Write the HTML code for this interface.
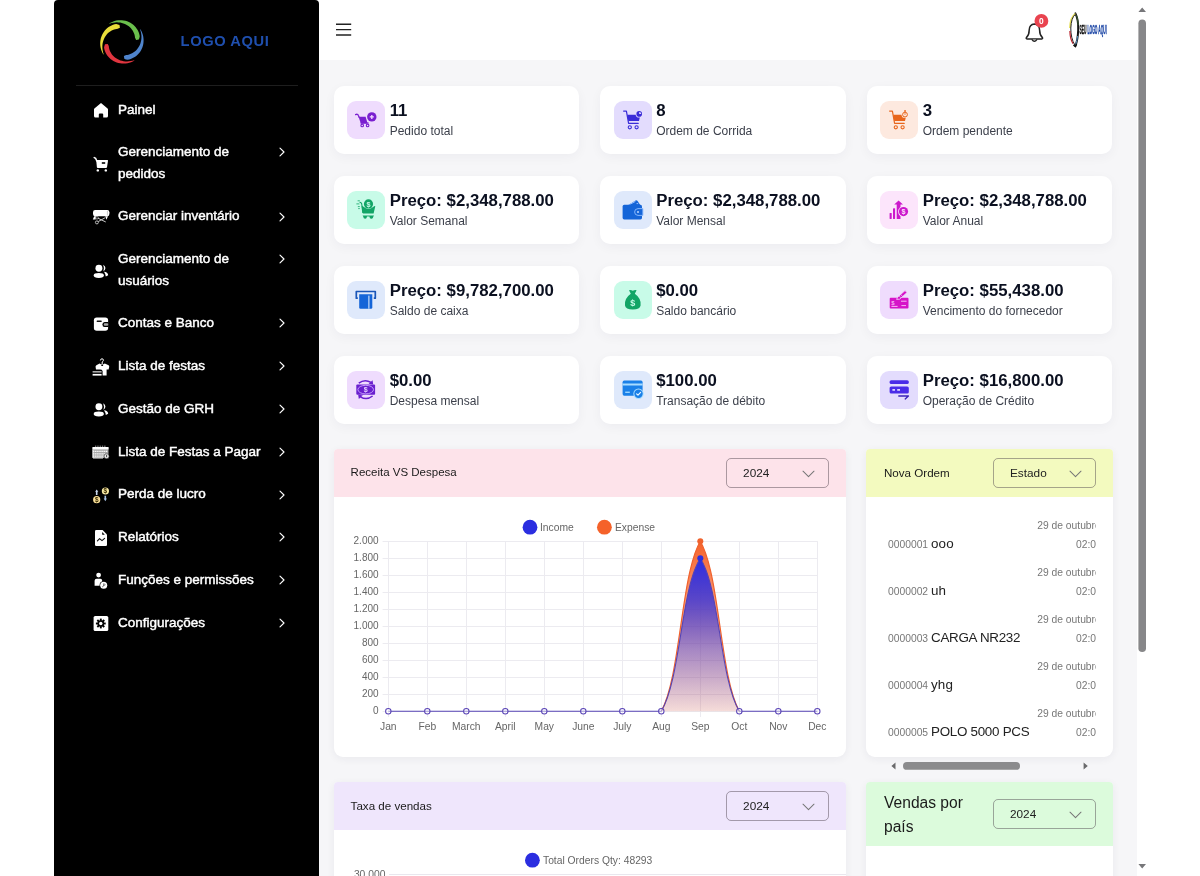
<!DOCTYPE html>
<html lang="pt">
<head>
<meta charset="utf-8">
<title>Painel</title>
<style>
*{box-sizing:border-box;margin:0;padding:0}
html,body{width:1200px;height:876px;overflow:hidden;background:#fff}
body{position:relative;font-family:"Liberation Sans",sans-serif;color:#0f172a}
.abs{position:absolute}
/* sidebar */
.sidebar{position:absolute;left:54px;top:0;width:265px;height:876px;background:#000;border-radius:4px 4px 0 0}
.sidebar .logo-text{position:absolute;left:126.6px;top:33.4px;font-weight:bold;font-size:14.7px;letter-spacing:.6px;color:#1f4fae;white-space:nowrap}
.sidebar .sep{position:absolute;left:22px;top:85px;width:222px;height:1px;background:#1e1e1e}
.nav-item{position:absolute;left:64px;width:180px;font-size:13.5px;line-height:21.4px;color:#fff;white-space:nowrap;-webkit-text-stroke:.45px #fff}
.nav-ico{position:absolute;left:38px;width:18px;height:18px}
.nav-chev{position:absolute;left:224px;width:8px;height:10px}
/* header */
.header{position:absolute;left:319px;top:0;width:817px;height:60px;background:#fff}
.content{position:absolute;left:319px;top:60px;width:818px;height:816px;background:#f6f6f8;overflow:hidden}
/* cards */
.card{position:absolute;width:245.6px;height:68.4px;background:#fff;border-radius:10px;box-shadow:0 3px 12px rgba(25,25,60,.045)}
.card .ib{position:absolute;left:13.4px;top:15.6px;width:38px;height:38px;border-radius:9px}
.card .ib svg{position:absolute;left:0;top:0;width:38px;height:38px}
.card .v{position:absolute;left:56px;top:15px;font-weight:bold;font-size:16.8px;line-height:20px;white-space:nowrap;color:#0b1020}
.card .l{position:absolute;left:56px;top:37px;font-size:12px;line-height:16px;white-space:nowrap;color:#3b3f4a}
/* panels */
.panel{position:absolute;background:#fff;border-radius:4px 4px 9px 9px;box-shadow:0 2px 8px rgba(30,30,60,.06);overflow:hidden}
.panel .ph{position:absolute;left:0;top:0;right:0}
.panel .pt{position:absolute;font-size:12px;color:#1a1a1a;white-space:nowrap}
.sel{position:absolute;width:103px;height:30px;border:1px solid rgba(70,60,70,.45);border-radius:5px;font-size:11.8px;color:#222;line-height:28px;padding-left:16px}
.sel svg{position:absolute;right:13px;top:10.5px;width:13px;height:8px}
.pt2{position:absolute;font-size:15.6px;line-height:24px;color:#1a1a1a;white-space:nowrap}
.clipx{position:absolute;left:0;top:48px;width:229.5px;height:260px;overflow:hidden}
.clipx>div{position:absolute;white-space:nowrap;margin-top:-48px}
.oid{left:22px;font-size:10.3px;line-height:12px;color:#777}
.onm{left:65px;font-size:13.4px;line-height:16px;color:#222}
.odt{font-size:10.3px;line-height:12px;color:#777}
.sidebar,.header,.content{will-change:transform}
</style>
</head>
<body>
<div class="sidebar"><svg class="abs" style="left:0;top:0" width="265" height="90" viewBox="54 0 265 90"><path fill="#6abf4c" d="M138.81 39.52 L139.38 37.92 L139.74 36.22 L139.43 34.64 L138.97 33.08 L138.37 31.54 L137.62 30.06 L136.73 28.63 L135.7 27.27 L134.55 26 L133.27 24.83 L131.88 23.77 L130.39 22.83 L128.81 22.02 L127.15 21.35 L125.43 20.83 L123.65 20.46 L121.84 20.25 L120 20.2 L118.16 20.32 L116.32 20.6 L114.51 21.04 L112.74 21.65 L111.02 22.41 L109.37 23.33 L109.6 23.66 L111.4 23.09 L113.21 22.68 L115.01 22.44 L116.78 22.34 L118.52 22.4 L120.21 22.6 L121.84 22.94 L123.41 23.41 L124.9 23.99 L126.3 24.68 L127.61 25.47 L128.82 26.35 L129.94 27.3 L130.94 28.33 L131.84 29.41 L132.62 30.54 L133.29 31.7 L133.85 32.89 L134.3 34.1 L134.65 35.31 L134.88 36.52 L135.01 37.72 L135.56 38.79 L136.09 39.91Z"/><path fill="#e9de3a" d="M119.52 24.99 L117.92 24.42 L116.22 24.06 L114.64 24.37 L113.08 24.83 L111.54 25.43 L110.06 26.18 L108.63 27.07 L107.27 28.1 L106 29.25 L104.83 30.53 L103.77 31.92 L102.83 33.41 L102.02 34.99 L101.35 36.65 L100.83 38.37 L100.46 40.15 L100.25 41.96 L100.2 43.8 L100.32 45.64 L100.6 47.48 L101.04 49.29 L101.65 51.06 L102.41 52.78 L103.33 54.43 L103.66 54.2 L103.09 52.4 L102.68 50.59 L102.44 48.79 L102.34 47.02 L102.4 45.28 L102.6 43.59 L102.94 41.96 L103.41 40.39 L103.99 38.9 L104.68 37.5 L105.47 36.19 L106.35 34.98 L107.3 33.86 L108.33 32.86 L109.41 31.96 L110.54 31.18 L111.7 30.51 L112.89 29.95 L114.1 29.5 L115.31 29.15 L116.52 28.92 L117.72 28.79 L118.79 28.24 L119.91 27.71Z"/><path fill="#e0353f" d="M104.99 44.28 L104.42 45.88 L104.06 47.58 L104.37 49.16 L104.83 50.72 L105.43 52.26 L106.18 53.74 L107.07 55.17 L108.1 56.53 L109.25 57.8 L110.53 58.97 L111.92 60.03 L113.41 60.97 L114.99 61.78 L116.65 62.45 L118.37 62.97 L120.15 63.34 L121.96 63.55 L123.8 63.6 L125.64 63.48 L127.48 63.2 L129.29 62.76 L131.06 62.15 L132.78 61.39 L134.43 60.47 L134.2 60.14 L132.4 60.71 L130.59 61.12 L128.79 61.36 L127.02 61.46 L125.28 61.4 L123.59 61.2 L121.96 60.86 L120.39 60.39 L118.9 59.81 L117.5 59.12 L116.19 58.33 L114.98 57.45 L113.86 56.5 L112.86 55.47 L111.96 54.39 L111.18 53.26 L110.51 52.1 L109.95 50.91 L109.5 49.7 L109.15 48.49 L108.92 47.28 L108.79 46.08 L108.24 45.01 L107.71 43.89Z"/><path fill="#4f84cc" d="M124.28 58.81 L125.88 59.38 L127.58 59.74 L129.16 59.43 L130.72 58.97 L132.26 58.37 L133.74 57.62 L135.17 56.73 L136.53 55.7 L137.8 54.55 L138.97 53.27 L140.03 51.88 L140.97 50.39 L141.78 48.81 L142.45 47.15 L142.97 45.43 L143.34 43.65 L143.55 41.84 L143.6 40 L143.48 38.16 L143.2 36.32 L142.76 34.51 L142.15 32.74 L141.39 31.02 L140.47 29.37 L140.14 29.6 L140.71 31.4 L141.12 33.21 L141.36 35.01 L141.46 36.78 L141.4 38.52 L141.2 40.21 L140.86 41.84 L140.39 43.41 L139.81 44.9 L139.12 46.3 L138.33 47.61 L137.45 48.82 L136.5 49.94 L135.47 50.94 L134.39 51.84 L133.26 52.62 L132.1 53.29 L130.91 53.85 L129.7 54.3 L128.49 54.65 L127.28 54.88 L126.08 55.01 L125.01 55.56 L123.89 56.09Z"/></svg>
<div class="logo-text">LOGO AQUI</div>
<div class="sep"></div>
<div class="nav-item" style="top:98.8px">Painel</div>
<div class="nav-item" style="top:141.1px">Gerenciamento de<br>pedidos</div>
<svg class="nav-chev" style="top:147.2px" viewBox="0 0 8 10"><path d="M2 1.2 L6 5 L2 8.8" fill="none" stroke="#fff" stroke-width="1.15" stroke-linecap="round" stroke-linejoin="round"/></svg>
<div class="nav-item" style="top:205.4px">Gerenciar inventário</div>
<svg class="nav-chev" style="top:211.5px" viewBox="0 0 8 10"><path d="M2 1.2 L6 5 L2 8.8" fill="none" stroke="#fff" stroke-width="1.15" stroke-linecap="round" stroke-linejoin="round"/></svg>
<div class="nav-item" style="top:248.1px">Gerenciamento de<br>usuários</div>
<svg class="nav-chev" style="top:254.2px" viewBox="0 0 8 10"><path d="M2 1.2 L6 5 L2 8.8" fill="none" stroke="#fff" stroke-width="1.15" stroke-linecap="round" stroke-linejoin="round"/></svg>
<div class="nav-item" style="top:312.2px">Contas e Banco</div>
<svg class="nav-chev" style="top:318.3px" viewBox="0 0 8 10"><path d="M2 1.2 L6 5 L2 8.8" fill="none" stroke="#fff" stroke-width="1.15" stroke-linecap="round" stroke-linejoin="round"/></svg>
<div class="nav-item" style="top:355px">Lista de festas</div>
<svg class="nav-chev" style="top:361.1px" viewBox="0 0 8 10"><path d="M2 1.2 L6 5 L2 8.8" fill="none" stroke="#fff" stroke-width="1.15" stroke-linecap="round" stroke-linejoin="round"/></svg>
<div class="nav-item" style="top:397.8px">Gestão de GRH</div>
<svg class="nav-chev" style="top:403.9px" viewBox="0 0 8 10"><path d="M2 1.2 L6 5 L2 8.8" fill="none" stroke="#fff" stroke-width="1.15" stroke-linecap="round" stroke-linejoin="round"/></svg>
<div class="nav-item" style="top:440.6px">Lista de Festas a Pagar</div>
<svg class="nav-chev" style="top:446.7px" viewBox="0 0 8 10"><path d="M2 1.2 L6 5 L2 8.8" fill="none" stroke="#fff" stroke-width="1.15" stroke-linecap="round" stroke-linejoin="round"/></svg>
<div class="nav-item" style="top:483.4px">Perda de lucro</div>
<svg class="nav-chev" style="top:489.5px" viewBox="0 0 8 10"><path d="M2 1.2 L6 5 L2 8.8" fill="none" stroke="#fff" stroke-width="1.15" stroke-linecap="round" stroke-linejoin="round"/></svg>
<div class="nav-item" style="top:526.2px">Relatórios</div>
<svg class="nav-chev" style="top:532.3px" viewBox="0 0 8 10"><path d="M2 1.2 L6 5 L2 8.8" fill="none" stroke="#fff" stroke-width="1.15" stroke-linecap="round" stroke-linejoin="round"/></svg>
<div class="nav-item" style="top:569px">Funções e permissões</div>
<svg class="nav-chev" style="top:575.1px" viewBox="0 0 8 10"><path d="M2 1.2 L6 5 L2 8.8" fill="none" stroke="#fff" stroke-width="1.15" stroke-linecap="round" stroke-linejoin="round"/></svg>
<div class="nav-item" style="top:611.8px">Configurações</div>
<svg class="nav-chev" style="top:617.9px" viewBox="0 0 8 10"><path d="M2 1.2 L6 5 L2 8.8" fill="none" stroke="#fff" stroke-width="1.15" stroke-linecap="round" stroke-linejoin="round"/></svg>
<svg class="abs" style="left:0;top:0" width="265" height="876" viewBox="54 0 265 876"><path fill="#fff" d="M101 103 L107.6 108.6 Q108 109 108 109.6 V116 Q108 117.6 106.4 117.6 H103.2 V114.4 Q103.2 113.4 102.2 113.4 H99.8 Q98.8 113.4 98.8 114.4 V117.6 H95.6 Q94 117.6 94 116 V109.6 Q94 109 94.4 108.6 Z"/><path fill="none" stroke="#fff" stroke-width="1.5" stroke-linecap="round" d="M94.2 157.6 L95.6 158.2 L96.8 161"/><path fill="#fff" d="M96.2 160 H107.4 Q108.2 160 108 160.8 L107 167.2 Q106.8 168 106 168 H97.8 Q97 168 96.9 167.2 Z"/><rect x="101.8" y="162.2" width="3.4" height="1.6" fill="#000"/><circle cx="97.8" cy="170.4" r="1.2" fill="#fff"/><circle cx="105.8" cy="170.4" r="1.2" fill="#fff"/><rect x="93" y="210" width="16.4" height="6.2" rx="2.2" fill="#fff"/><path d="M107.4 211 V215.4" stroke="#bbb" stroke-width=".8"/><path fill="#fff" d="M94.2 216.2 L92.8 219.6 H95.6 L96.4 216.2Z M105.2 216.2 H108 L106.4 219.8 Z"/><circle cx="96.9" cy="222.4" r="1.5" fill="none" stroke="#bbb" stroke-width="1"/><circle cx="97" cy="217.8" r="1.3" fill="none" stroke="#999" stroke-width=".9"/><path d="M98.4 218.4 L105.4 221.8 M98.6 221.4 L104.6 218" stroke="#ccc" stroke-width="1" stroke-linecap="round"/><circle cx="98.9" cy="268.2" r="3.45" fill="#fff"/><ellipse cx="98.8" cy="275.5" rx="5.1" ry="2.4" fill="#fff"/><path fill="#fff" d="M103.2 264.8 Q107.6 268 103.4 271.4 Q104.6 268 103.2 264.8Z"/><path fill="#fff" d="M104 271.8 Q107.8 272.2 108.2 275.2 L105.8 276.6 Q105.6 274 104 271.8Z"/><circle cx="98.9" cy="406.7" r="3.45" fill="#fff"/><ellipse cx="98.8" cy="414" rx="5.1" ry="2.4" fill="#fff"/><path fill="#fff" d="M103.2 403.3 Q107.6 406.5 103.4 409.9 Q104.6 406.5 103.2 403.3Z"/><path fill="#fff" d="M104 410.3 Q107.8 410.7 108.2 413.7 L105.8 415.1 Q105.6 412.5 104 410.3Z"/><rect x="93.9" y="317.4" width="14.2" height="13.4" rx="2.8" fill="#fff"/><rect x="96.7" y="320.4" width="5" height="1.5" rx=".5" fill="#111"/><path d="M108.2 321.9 H104.6 Q102.4 321.9 102.4 324.5 Q102.4 327.1 104.6 327.1 H108.2Z" fill="#000"/><rect x="103.8" y="323.2" width="4.4" height="2.6" rx="1" fill="#aaa"/><path fill="none" stroke="#fff" stroke-width="1" d="M100.4 360.4 Q100.6 358.8 102 358.8 Q103.6 358.8 103.4 360.4 Q103.2 361.4 102.2 362 V364"/><path fill="#fff" d="M99.6 363.6 Q102.2 365.4 104.8 363.6 L108.6 365.2 Q109.4 365.8 109.2 367 L108.6 369.6 H106.6 V375.6 H102.6 V371 Q102 369.6 100 369.6 H96 L95.6 367 Q95.4 365.6 96.4 365.2Z"/><ellipse cx="102.2" cy="365.4" rx="1" ry=".7" fill="#000"/><rect x="92.6" y="371" width="9" height="1.6" fill="#aaa"/><rect x="92.6" y="373.9" width="9" height="1.7" fill="#fff"/><rect x="92.5" y="447" width="16" height="11" rx="1" fill="#a8a8a8"/><rect x="92.5" y="447" width="16" height="2.4" fill="#fff"/><path d="M95 446.2 H106" stroke="#aaa" stroke-width="1" stroke-dasharray="1.3 1"/><path d="M93 451.4 H108 M93 453.8 H108 M93 456.2 H108" stroke="#fff" stroke-width="1.3" stroke-dasharray="1.4 .7"/><path d="M93 449.6 V458 H103" fill="none" stroke="#eee" stroke-width="1"/><circle cx="106.6" cy="456.2" r="2.5" fill="#eee" stroke="#000" stroke-width=".5"/><rect x="106.2" y="454.8" width=".9" height="2.4" fill="#333"/><circle cx="105.4" cy="491" r="3.6" fill="#f7e9a6"/><circle cx="96.7" cy="499.7" r="3.6" fill="#fbe19a"/><text x="105.4" y="493.3" font-size="6.4" font-weight="bold" text-anchor="middle" fill="#3a2c00" font-family="Liberation Sans, sans-serif">$</text><text x="96.7" y="502" font-size="6.4" font-weight="bold" text-anchor="middle" fill="#3a2c00" font-family="Liberation Sans, sans-serif">$</text><path d="M96.7 489.4 L98.3 491.8 H97.5 V495 H95.9 V491.8 H95.1Z" fill="#c8d8ee"/><path d="M105.3 501.2 L106.9 498.6 H106.1 V495.8 H104.5 V498.6 H103.7Z" fill="#a9c4e6"/><path fill="#fff" d="M96.2 530 H102.6 L107 534.4 V544.8 Q107 546 105.8 546 H96.2 Q95 546 95 544.8 V531.2 Q95 530 96.2 530Z"/><path fill="#000" d="M102.2 532 L104.8 534.8 H102.8 Q102.2 534.8 102.2 534.2Z"/><path fill="none" stroke="#111" stroke-width="1.1" stroke-linecap="round" stroke-linejoin="round" d="M97.4 540.8 L99.6 538.6 L102 540.6 L104.6 538.4"/><circle cx="98.6" cy="575.1" r="2.4" fill="#fff"/><path fill="#fff" d="M96.6 578.8 H100.4 Q102.2 578.8 102.2 580.8 V585.8 H94.6 V580.8 Q94.6 578.8 96.6 578.8Z"/><circle cx="103.7" cy="585.3" r="4.1" fill="#000"/><circle cx="103.7" cy="585.3" r="3.5" fill="#fff"/><path d="M103.9 583.4 V585.5 L102.4 586.8" fill="none" stroke="#333" stroke-width=".9"/><path d="M104 585.4 L105.6 584.6" stroke="#777" stroke-width=".8"/><rect x="93.6" y="616" width="14.7" height="15" rx="1.6" fill="#fff"/><path d="M103.4 623.5 L105.7 623.5" stroke="#000" stroke-width="1.9"/><path d="M102.64 625.34 L104.26 626.96" stroke="#000" stroke-width="1.9"/><path d="M100.8 626.1 L100.8 628.4" stroke="#000" stroke-width="1.9"/><path d="M98.96 625.34 L97.34 626.96" stroke="#000" stroke-width="1.9"/><path d="M98.2 623.5 L95.9 623.5" stroke="#000" stroke-width="1.9"/><path d="M98.96 621.66 L97.34 620.04" stroke="#000" stroke-width="1.9"/><path d="M100.8 620.9 L100.8 618.6" stroke="#000" stroke-width="1.9"/><path d="M102.64 621.66 L104.26 620.04" stroke="#000" stroke-width="1.9"/><circle cx="100.8" cy="623.5" r="3.3" fill="#000"/><circle cx="100.8" cy="623.5" r="1.7" fill="#fff"/></svg></div>
<div class="header"><svg class="abs" style="left:0;top:0" width="817" height="60" viewBox="319 0 817 60">
<path d="M336 24.2 H351.2 M336 29.6 H351.2 M336 35 H351.2" stroke="#222" stroke-width="1.4"/>
<path d="M1034.4 24 Q1029.4 24.4 1029.2 30 Q1029.2 35 1026.4 37.6 Q1025.8 38.8 1027 38.9 H1041.8 Q1043 38.8 1042.4 37.6 Q1039.6 35 1039.6 30 Q1039.4 24.4 1034.4 24Z" fill="#fff" stroke="#222" stroke-width="1.5" stroke-linejoin="round"/>
<path d="M1031.8 39.4 Q1034.4 43.4 1037 39.4" fill="#ccc" stroke="#222" stroke-width="1.3"/>
<circle cx="1041.4" cy="20.9" r="6.9" fill="#e9434f"/>
<text x="1041.4" y="23.9" font-size="8.4" font-weight="bold" fill="#fff" text-anchor="middle" font-family="Liberation Sans, sans-serif">0</text>
<path d="M1075.4 13.4 Q1078.6 20 1078.2 30 Q1077.8 40 1075.4 45.8" fill="none" stroke="#151515" stroke-width="2" stroke-linecap="round"/>
<path d="M1075.4 13.6 Q1070.2 17 1069.8 28" fill="none" stroke="#e6e05a" stroke-width="1.5"/>
<path d="M1075.2 14.4 Q1071.2 18 1070.8 28 Q1070.6 38 1075 45.4" fill="none" stroke="#222" stroke-width="1"/>
<path d="M1069.9 31 Q1070 39 1073 43.6" fill="none" stroke="#b8202a" stroke-width="1.2"/>
<path d="M1077.6 36 Q1077 41 1075.6 44.6" fill="none" stroke="#5a9ad0" stroke-width=".9"/>
<path d="M1076.6 15.4 Q1077.8 19 1078.2 25" fill="none" stroke="#3f6a3a" stroke-width=".9"/>
<path d="M1073.4 45 L1075.4 46.6 L1076.6 44" fill="none" stroke="#111" stroke-width="1.4"/>
<text transform="translate(1079.6 34.4) scale(.272 1)" font-size="12.4" font-weight="bold" stroke-width=".5" font-family="Liberation Sans, sans-serif"><tspan fill="#111" stroke="#111">SEU </tspan><tspan fill="#1a44a4" stroke="#1a44a4">LOGO AQUI</tspan></text>
</svg></div>
<div class="content"><div class="card" style="left:14.7px;top:25.6px"><div class="ib" style="background:#efdcfd"><svg viewBox="0 0 38 38"><path d="M8.6 13.6 Q10.6 12.6 11.4 14.6 L12.2 16.4" fill="none" stroke="#7a1fd0" stroke-width="1.3" stroke-linecap="round"/><path d="M11.6 15.8 H18.6 L20.6 22.4 H13.8Z" fill="#7a1fd0"/><path d="M13.6 22 H21.6" stroke="#7a1fd0" stroke-width="1.2"/><circle cx="15.2" cy="24.4" r="1.3" fill="none" stroke="#7a1fd0" stroke-width="1.1"/><circle cx="20.6" cy="24.4" r="1.3" fill="none" stroke="#7a1fd0" stroke-width="1.1"/><circle cx="24.8" cy="15.9" r="4.7" fill="#7a1fd0"/><path d="M24.8 13.9 V17.9 M22.8 15.9 H26.8" stroke="#f3d9ff" stroke-width="1.3"/></svg></div><div class="v">11</div><div class="l">Pedido total</div></div>
<div class="card" style="left:281.2px;top:25.6px"><div class="ib" style="background:#e3dcfd"><svg viewBox="0 0 38 38"><path d="M9.6 10.1 H12.4 L14.6 22.4 H24.2" fill="none" stroke="#3a2cd8" stroke-width="1.2" stroke-linecap="round" stroke-linejoin="round"/><path d="M13.2 13.8 H26.4 L25 19.9 H14.3Z" fill="#3a2cd8"/><circle cx="15.8" cy="26.3" r="1.6" fill="none" stroke="#3a2cd8" stroke-width="1.1"/><circle cx="22.6" cy="26.3" r="1.6" fill="none" stroke="#3a2cd8" stroke-width="1.1"/><circle cx="25.2" cy="12.9" r="3.6" fill="#e3dcfd"/><circle cx="25.2" cy="12.9" r="2.8" fill="#3a2cd8"/><path d="M25.2 12.9 V10.9 A2 2 0 0 1 27.2 12.9Z" fill="#e3dcfd"/></svg></div><div class="v">8</div><div class="l">Ordem de Corrida</div></div>
<div class="card" style="left:547.7px;top:25.6px"><div class="ib" style="background:#fde9df"><svg viewBox="0 0 38 38"><path d="M9.6 10.1 H12.4 L14.6 22.4 H24.2" fill="none" stroke="#e8661c" stroke-width="1.2" stroke-linecap="round" stroke-linejoin="round"/><path d="M13.2 13.8 H26.4 L25 19.9 H14.3Z" fill="#e8661c"/><circle cx="15.8" cy="26.3" r="1.6" fill="none" stroke="#e8661c" stroke-width="1.1"/><circle cx="22.6" cy="26.3" r="1.6" fill="none" stroke="#e8661c" stroke-width="1.1"/><circle cx="25" cy="13.6" r="3.5" fill="#fde9df"/><circle cx="25" cy="13.6" r="2.4" fill="#fde9df" stroke="#e8661c" stroke-width="1"/><rect x="24.2" y="9.2" width="1.7" height="1.6" fill="#e8661c"/><path d="M25 13.8 V12.2" stroke="#e8661c" stroke-width=".9"/></svg></div><div class="v">3</div><div class="l">Ordem pendente</div></div>
<div class="card" style="left:14.7px;top:115.6px"><div class="ib" style="background:#c8fbe8"><svg viewBox="0 0 38 38"><path d="M10.6 9.8 H12.8 M9.4 12.9 H12.4 M10.8 15.6 H12.8 M11.2 17.6 H12.8" stroke="#12a566" stroke-width="1" opacity=".8"/><path d="M12.6 11.4 Q14.6 11.2 14.8 13.4 L15.8 22" fill="none" stroke="#12a566" stroke-width="1.1"/><path d="M14.6 15.3 Q15.6 14.8 16.2 15.6 Q21.5 20.4 26.8 15.6 Q27.4 14.8 28.3 15.3 L26.6 22.6 H15.9Z" fill="#12a566"/><path d="M15.6 24.6 H27 L26.4 25.4 Q26 28 24.2 27.8 Q22.6 27.8 22.4 25.4 H20 Q19.8 27.8 18.2 27.8 Q16.4 27.8 16.2 25.4Z" fill="#12a566"/><circle cx="21.5" cy="12.9" r="4.6" fill="#12a566"/><text x="21.5" y="15.5" font-size="7.2" font-weight="bold" text-anchor="middle" fill="#c8fbe8" font-family="Liberation Sans, sans-serif">$</text></svg></div><div class="v">Preço: $2,348,788.00</div><div class="l">Valor Semanal</div></div>
<div class="card" style="left:281.2px;top:115.6px"><div class="ib" style="background:#dfe9fb"><svg viewBox="0 0 38 38"><path d="M13.6 14.4 L21.6 9.4 Q22.6 9 23.4 9.8 L26.6 14.4Z" fill="#1565d8"/><path d="M15.4 13.6 L21.4 10.4" stroke="#9cc3ff" stroke-width="1"/><path d="M22.6 12.6 H24.2" stroke="#9cc3ff" stroke-width="1"/><rect x="8.6" y="13.8" width="19.4" height="14.6" rx="1.6" fill="#1565d8"/><path d="M28.9 17.6 H24 Q20.6 17.8 20.6 21 Q20.6 24.2 24 24.4 H28.9Z" fill="#1565d8" stroke="#8fbcff" stroke-width=".9"/><circle cx="24" cy="21" r="1" fill="#b9d6ff"/></svg></div><div class="v">Preço: $2,348,788.00</div><div class="l">Valor Mensal</div></div>
<div class="card" style="left:547.7px;top:115.6px"><div class="ib" style="background:#fce5fb"><svg viewBox="0 0 38 38"><rect x="9.6" y="21.9" width="2.1" height="6" rx=".4" fill="#cc18cc"/><rect x="13" y="17.3" width="2.1" height="10.6" rx=".4" fill="#cc18cc"/><path d="M18.6 9.6 L23 13.6 H20.5 V27.9 H16.7 V13.6 H14.2Z" fill="#cc18cc"/><circle cx="23.5" cy="20.6" r="5.4" fill="#fce5fb"/><circle cx="23.5" cy="20.6" r="4.6" fill="#cc18cc"/><text x="23.5" y="23.2" font-size="7.2" font-weight="bold" text-anchor="middle" fill="#fce5fb" font-family="Liberation Sans, sans-serif">$</text></svg></div><div class="v">Preço: $2,348,788.00</div><div class="l">Valor Anual</div></div>
<div class="card" style="left:14.7px;top:205.6px"><div class="ib" style="background:#dfe9fb"><svg viewBox="0 0 38 38"><path d="M10.8 17.2 H9.3 V10.5 H28.3 V17.2 H26.8" fill="none" stroke="#1a56b8" stroke-width="1.7" stroke-linejoin="round"/><path d="M12.2 13.2 H25.3 V26.4 Q25.3 27.7 24 27.7 H13.5 Q12.2 27.7 12.2 26.4Z" fill="#1565d8"/><rect x="21.4" y="14.6" width="1" height="13.1" fill="#e8f3ff"/></svg></div><div class="v">Preço: $9,782,700.00</div><div class="l">Saldo de caixa</div></div>
<div class="card" style="left:281.2px;top:205.6px"><div class="ib" style="background:#c8fbe8"><svg viewBox="0 0 38 38"><path d="M15 9.2 Q16.8 8.6 18.8 9.8 Q20.8 8.6 22.6 9.2 L20.8 12.8 Q27.4 17.4 26.6 24.4 Q26 28.4 18.8 28.4 Q11.6 28.4 11 24.4 Q10.2 17.4 16.8 12.8Z" fill="#12a566"/><text x="18.8" y="24.6" font-size="9" font-weight="bold" text-anchor="middle" fill="#c8fbe8" font-family="Liberation Sans, sans-serif">$</text></svg></div><div class="v">$0.00</div><div class="l">Saldo bancário</div></div>
<div class="card" style="left:547.7px;top:205.6px"><div class="ib" style="background:#efdcfd"><svg viewBox="0 0 38 38"><rect x="9.7" y="16.7" width="18.8" height="10.7" rx="1" fill="#d614c8"/><path d="M16.6 18.4 L17.6 16.2 L25 9.6 L27 11.6 L19.6 18.2Z" fill="#d614c8" stroke="#efdcfd" stroke-width=".8"/><path d="M19 14.8 L21 16.8 M20.6 13.4 L22.6 15.4" stroke="#efdcfd" stroke-width=".7"/><text x="13" y="24" font-size="6" font-weight="bold" text-anchor="middle" fill="#f6b8f4" font-family="Liberation Sans, sans-serif">$</text><path d="M21 20.2 H26.6 M11.4 25.4 H17.6 M21.4 24.6 H26" stroke="#f6b8f4" stroke-width="1"/></svg></div><div class="v">Preço: $55,438.00</div><div class="l">Vencimento do fornecedor</div></div>
<div class="card" style="left:14.7px;top:295.6px"><div class="ib" style="background:#efdcfd"><svg viewBox="0 0 38 38"><rect x="9.3" y="13.4" width="18.8" height="10.4" rx="1" fill="#6a1fcf"/><ellipse cx="18.7" cy="18.6" rx="7.8" ry="4.3" fill="none" stroke="#c9a3ff" stroke-width=".9"/><path d="M11.8 12.2 Q17.6 7.6 24 11.4" fill="none" stroke="#6a1fcf" stroke-width="1.5"/><path d="M21.6 12.8 L25.6 9.2 L26.2 13.6Z" fill="#6a1fcf"/><path d="M25.6 25 Q19.8 29.6 13.4 25.8" fill="none" stroke="#6a1fcf" stroke-width="1.5"/><path d="M15.8 24.4 L11.8 28 L11.2 23.6Z" fill="#6a1fcf"/><text x="18.8" y="21.2" font-size="7" font-weight="bold" text-anchor="middle" fill="#e5d0ff" font-family="Liberation Sans, sans-serif">$</text></svg></div><div class="v">$0.00</div><div class="l">Despesa mensal</div></div>
<div class="card" style="left:281.2px;top:295.6px"><div class="ib" style="background:#dfe9fb"><svg viewBox="0 0 38 38"><rect x="8.6" y="9.6" width="20" height="15.1" rx="1.6" fill="#1a80e8"/><rect x="8.6" y="12.5" width="20" height="2" fill="#a8dcff"/><rect x="11.2" y="20.6" width="4.6" height="1.3" fill="#a8dcff"/><circle cx="24.5" cy="22.7" r="5.2" fill="#a8dcff"/><circle cx="24.5" cy="22.7" r="4.2" fill="#1a80e8"/><path d="M22.6 22.8 L24 24.2 L26.6 21.4" fill="none" stroke="#e8f6ff" stroke-width="1.2" stroke-linecap="round" stroke-linejoin="round"/></svg></div><div class="v">$100.00</div><div class="l">Transação de débito</div></div>
<div class="card" style="left:547.7px;top:295.6px"><div class="ib" style="background:#e3dcfd"><svg viewBox="0 0 38 38"><rect x="9.6" y="9.2" width="19.2" height="3.8" rx="1.6" fill="#4a2ce8"/><rect x="9.6" y="15.5" width="19.2" height="7.1" rx="1.6" fill="#4a2ce8"/><rect x="12.4" y="18" width="2.6" height="1.8" fill="#d9d2ff"/><rect x="17.2" y="18" width="2.8" height="1.8" fill="#d9d2ff"/><path d="M18.8 25 H28.4 L25.2 27.9" fill="none" stroke="#3a22b8" stroke-width="1.4" stroke-linecap="round" stroke-linejoin="round"/></svg></div><div class="v">Preço: $16,800.00</div><div class="l">Operação de Crédito</div></div>
<div class="panel" style="left:14.6px;top:389px;width:512px;height:308px"><div class="ph" style="height:48px;background:#fde3ea"></div><div class="pt" style="left:17px;top:17px;font-size:11.5px">Receita VS Despesa</div><div class="sel" style="left:392.5px;top:9px">2024<svg viewBox="0 0 13 8"><path d="M1 1.2 L6.5 6.6 L12 1.2" fill="none" stroke="#777" stroke-width="1.05" stroke-linecap="round" stroke-linejoin="round"/></svg></div><svg class="abs" style="left:0;top:48px" width="512" height="260" viewBox="334 497 512 260"><defs><linearGradient id="gi" gradientUnits="userSpaceOnUse" x1="0" y1="541" x2="0" y2="711"><stop offset="0" stop-color="#2a2ee6"/><stop offset=".1" stop-color="#2c2fe4"/><stop offset=".35" stop-color="#2e30e0" stop-opacity=".78"/><stop offset=".64" stop-color="#3030dc" stop-opacity=".42"/><stop offset="1" stop-color="#3030d8" stop-opacity=".04"/></linearGradient><linearGradient id="ge" gradientUnits="userSpaceOnUse" x1="0" y1="541" x2="0" y2="711"><stop offset="0" stop-color="#f5622a"/><stop offset=".64" stop-color="#f5622a" stop-opacity=".36"/><stop offset="1" stop-color="#f5622a" stop-opacity=".18"/></linearGradient></defs><path d="M382.6 711.5 H817.6 M382.6 694.5 H817.6 M382.6 677.5 H817.6 M382.6 660.5 H817.6 M382.6 643.5 H817.6 M382.6 626.5 H817.6 M382.6 609.5 H817.6 M382.6 592.5 H817.6 M382.6 575.5 H817.6 M382.6 558.5 H817.6 M382.6 541.5 H817.6 M388.5 541.3 V717 M427.5 541.3 V717 M466.5 541.3 V717 M505.5 541.3 V717 M544.5 541.3 V717 M583.5 541.3 V717 M622.5 541.3 V717 M661.5 541.3 V717 M700.5 541.3 V717 M739.5 541.3 V717 M778.5 541.3 V717 M817.5 541.3 V717" stroke="#ecebf0" stroke-width="1" fill="none"/><text x="378.6" y="714.3" font-size="10" fill="#666" text-anchor="end" font-family="Liberation Sans, sans-serif">0</text><text x="378.6" y="697.31" font-size="10" fill="#666" text-anchor="end" font-family="Liberation Sans, sans-serif">200</text><text x="378.6" y="680.32" font-size="10" fill="#666" text-anchor="end" font-family="Liberation Sans, sans-serif">400</text><text x="378.6" y="663.33" font-size="10" fill="#666" text-anchor="end" font-family="Liberation Sans, sans-serif">600</text><text x="378.6" y="646.34" font-size="10" fill="#666" text-anchor="end" font-family="Liberation Sans, sans-serif">800</text><text x="378.6" y="629.35" font-size="10" fill="#666" text-anchor="end" font-family="Liberation Sans, sans-serif">1.000</text><text x="378.6" y="612.36" font-size="10" fill="#666" text-anchor="end" font-family="Liberation Sans, sans-serif">1.200</text><text x="378.6" y="595.37" font-size="10" fill="#666" text-anchor="end" font-family="Liberation Sans, sans-serif">1.400</text><text x="378.6" y="578.38" font-size="10" fill="#666" text-anchor="end" font-family="Liberation Sans, sans-serif">1.600</text><text x="378.6" y="561.39" font-size="10" fill="#666" text-anchor="end" font-family="Liberation Sans, sans-serif">1.800</text><text x="378.6" y="544.4" font-size="10" fill="#666" text-anchor="end" font-family="Liberation Sans, sans-serif">2.000</text><text x="388.3" y="729.6" font-size="10.3" fill="#666" text-anchor="middle" font-family="Liberation Sans, sans-serif">Jan</text><text x="427.3" y="729.6" font-size="10.3" fill="#666" text-anchor="middle" font-family="Liberation Sans, sans-serif">Feb</text><text x="466.3" y="729.6" font-size="10.3" fill="#666" text-anchor="middle" font-family="Liberation Sans, sans-serif">March</text><text x="505.3" y="729.6" font-size="10.3" fill="#666" text-anchor="middle" font-family="Liberation Sans, sans-serif">April</text><text x="544.3" y="729.6" font-size="10.3" fill="#666" text-anchor="middle" font-family="Liberation Sans, sans-serif">May</text><text x="583.3" y="729.6" font-size="10.3" fill="#666" text-anchor="middle" font-family="Liberation Sans, sans-serif">June</text><text x="622.3" y="729.6" font-size="10.3" fill="#666" text-anchor="middle" font-family="Liberation Sans, sans-serif">July</text><text x="661.3" y="729.6" font-size="10.3" fill="#666" text-anchor="middle" font-family="Liberation Sans, sans-serif">Aug</text><text x="700.3" y="729.6" font-size="10.3" fill="#666" text-anchor="middle" font-family="Liberation Sans, sans-serif">Sep</text><text x="739.3" y="729.6" font-size="10.3" fill="#666" text-anchor="middle" font-family="Liberation Sans, sans-serif">Oct</text><text x="778.3" y="729.6" font-size="10.3" fill="#666" text-anchor="middle" font-family="Liberation Sans, sans-serif">Nov</text><text x="817.3" y="729.6" font-size="10.3" fill="#666" text-anchor="middle" font-family="Liberation Sans, sans-serif">Dec</text><path d="M388.3 711.2 L427.3 711.2 L466.3 711.2 L505.3 711.2 L544.3 711.2 L583.3 711.2 L622.3 711.2 L661.3 711.2 C680.8 675.52 680.8 574.6 700.3 541.3 C719.8 574.6 719.8 675.52 739.3 711.2 L778.3 711.2 L817.3 711.2 L817.3 711.2 L388.3 711.2Z" fill="url(#ge)"/><path d="M661.3 711.2 C680.8 675.52 680.8 574.6 700.3 541.3 C719.8 574.6 719.8 675.52 739.3 711.2" fill="none" stroke="#f0622d" stroke-width="1.2"/><path d="M388.3 711.2 L427.3 711.2 L466.3 711.2 L505.3 711.2 L544.3 711.2 L583.3 711.2 L622.3 711.2 L661.3 711.2 C680.8 679.09 680.8 588.26 700.3 558.29 C719.8 588.26 719.8 679.09 739.3 711.2 L778.3 711.2 L817.3 711.2 L817.3 711.2 L388.3 711.2Z" fill="url(#gi)"/><path d="M388.3 711.2 L427.3 711.2 L466.3 711.2 L505.3 711.2 L544.3 711.2 L583.3 711.2 L622.3 711.2 L661.3 711.2 C680.8 679.09 680.8 588.26 700.3 558.29 C719.8 588.26 719.8 679.09 739.3 711.2 L778.3 711.2 L817.3 711.2" fill="none" stroke="#5544b4" stroke-width="1.1"/><circle cx="388.3" cy="711.2" r="2.7" fill="#fff" fill-opacity=".45" stroke="#5a44b6" stroke-width="1.05"/><circle cx="427.3" cy="711.2" r="2.7" fill="#fff" fill-opacity=".45" stroke="#5a44b6" stroke-width="1.05"/><circle cx="466.3" cy="711.2" r="2.7" fill="#fff" fill-opacity=".45" stroke="#5a44b6" stroke-width="1.05"/><circle cx="505.3" cy="711.2" r="2.7" fill="#fff" fill-opacity=".45" stroke="#5a44b6" stroke-width="1.05"/><circle cx="544.3" cy="711.2" r="2.7" fill="#fff" fill-opacity=".45" stroke="#5a44b6" stroke-width="1.05"/><circle cx="583.3" cy="711.2" r="2.7" fill="#fff" fill-opacity=".45" stroke="#5a44b6" stroke-width="1.05"/><circle cx="622.3" cy="711.2" r="2.7" fill="#fff" fill-opacity=".45" stroke="#5a44b6" stroke-width="1.05"/><circle cx="661.3" cy="711.2" r="2.7" fill="#fff" fill-opacity=".45" stroke="#5a44b6" stroke-width="1.05"/><circle cx="739.3" cy="711.2" r="2.7" fill="#fff" fill-opacity=".45" stroke="#5a44b6" stroke-width="1.05"/><circle cx="778.3" cy="711.2" r="2.7" fill="#fff" fill-opacity=".45" stroke="#5a44b6" stroke-width="1.05"/><circle cx="817.3" cy="711.2" r="2.7" fill="#fff" fill-opacity=".45" stroke="#5a44b6" stroke-width="1.05"/><circle cx="700.3" cy="541.3" r="3" fill="#f0622d"/><circle cx="700.3" cy="558.3" r="3" fill="#2c30e0"/><circle cx="530" cy="527.2" r="7.4" fill="#2b2ee0"/><text x="540" y="530.6" font-size="10.3" fill="#666" font-family="Liberation Sans, sans-serif">Income</text><circle cx="604.4" cy="527.2" r="7.4" fill="#f5622a"/><text x="615" y="530.6" font-size="10.3" fill="#666" font-family="Liberation Sans, sans-serif">Expense</text></svg></div>
<div class="panel" style="left:547px;top:389px;width:247px;height:308px"><div class="ph" style="height:48px;background:#f3fabf"></div><div class="pt" style="left:18px;top:17px;font-size:11.6px">Nova Ordem</div><div class="sel" style="left:127px;top:9px">Estado<svg viewBox="0 0 13 8"><path d="M1 1.2 L6.5 6.6 L12 1.2" fill="none" stroke="#777" stroke-width="1.05" stroke-linecap="round" stroke-linejoin="round"/></svg></div><div class="clipx"><div class="oid" style="top:90.4px">0000001</div><div class="onm" style="top:87.4px;letter-spacing:.15px">ooo</div><div class="odt" style="top:71.4px;left:171.2px">29 de outubro</div><div class="odt" style="top:90.4px;left:210px">02:00</div><div class="oid" style="top:137.3px">0000002</div><div class="onm" style="top:134.3px;letter-spacing:.15px">uh</div><div class="odt" style="top:118.3px;left:171.2px">29 de outubro</div><div class="odt" style="top:137.3px;left:210px">02:00</div><div class="oid" style="top:184.2px">0000003</div><div class="onm" style="top:181.2px;letter-spacing:-.28px">CARGA NR232</div><div class="odt" style="top:165.2px;left:171.2px">29 de outubro</div><div class="odt" style="top:184.2px;left:210px">02:00</div><div class="oid" style="top:231.1px">0000004</div><div class="onm" style="top:228.1px;letter-spacing:.15px">yhg</div><div class="odt" style="top:212.1px;left:171.2px">29 de outubro</div><div class="odt" style="top:231.1px;left:210px">02:00</div><div class="oid" style="top:278px">0000005</div><div class="onm" style="top:275px;letter-spacing:-.28px">POLO 5000 PCS</div><div class="odt" style="top:259px;left:171.2px">29 de outubro</div><div class="odt" style="top:278px;left:210px">02:00</div></div></div>
<svg class="abs" style="left:549px;top:698px" width="245" height="16" viewBox="868 758 245 16"><path d="M895.5 762.4 V769.6 L891.4 766Z M1083.6 762.4 V769.6 L1087.8 766Z" fill="#6a6a6c"/><rect x="903" y="762" width="117" height="7.8" rx="3.9" fill="#8b8b8d"/></svg>
<div class="panel" style="left:14.6px;top:722.4px;width:512px;height:200px"><div class="ph" style="height:48px;background:#efe6fc"></div><div class="pt" style="left:17px;top:17px;font-size:11.6px">Taxa de vendas</div><div class="sel" style="left:392.5px;top:9px">2024<svg viewBox="0 0 13 8"><path d="M1 1.2 L6.5 6.6 L12 1.2" fill="none" stroke="#777" stroke-width="1.05" stroke-linecap="round" stroke-linejoin="round"/></svg></div><svg class="abs" style="left:0;top:48px" width="512" height="60" viewBox="334 831 512 60"><circle cx="532.4" cy="861.2" r="7.4" fill="#2b2ee0"/><text x="543" y="864.6" font-size="10.3" fill="#666" font-family="Liberation Sans, sans-serif">Total Orders Qty: 48293</text><text x="385.4" y="878.8" font-size="10.3" fill="#666" text-anchor="end" font-family="Liberation Sans, sans-serif">30.000</text><path d="M389 875.5 H846" stroke="#e9e7ee"/></svg></div>
<div class="panel" style="left:547px;top:722.4px;width:247px;height:200px"><div class="ph" style="height:64px;background:#dcfbdc"></div><div class="pt2" style="left:18px;top:9px">Vendas por<br>país</div><div class="sel" style="left:127px;top:17px">2024<svg viewBox="0 0 13 8"><path d="M1 1.2 L6.5 6.6 L12 1.2" fill="none" stroke="#777" stroke-width="1.05" stroke-linecap="round" stroke-linejoin="round"/></svg></div></div></div>
<div class="abs" style="left:1136px;top:0;width:14px;height:876px;background:transparent"></div><svg class="abs" style="left:1136px;top:0" width="14" height="876" viewBox="1136 0 14 876"><path d="M1142.2 7.6 L1146 12 H1138.4Z M1142.2 868.4 L1146 864 H1138.4Z" fill="#77777a"/><rect x="1138.4" y="19.6" width="7.6" height="632.4" rx="3.8" fill="#878789"/></svg>
</body>
</html>
